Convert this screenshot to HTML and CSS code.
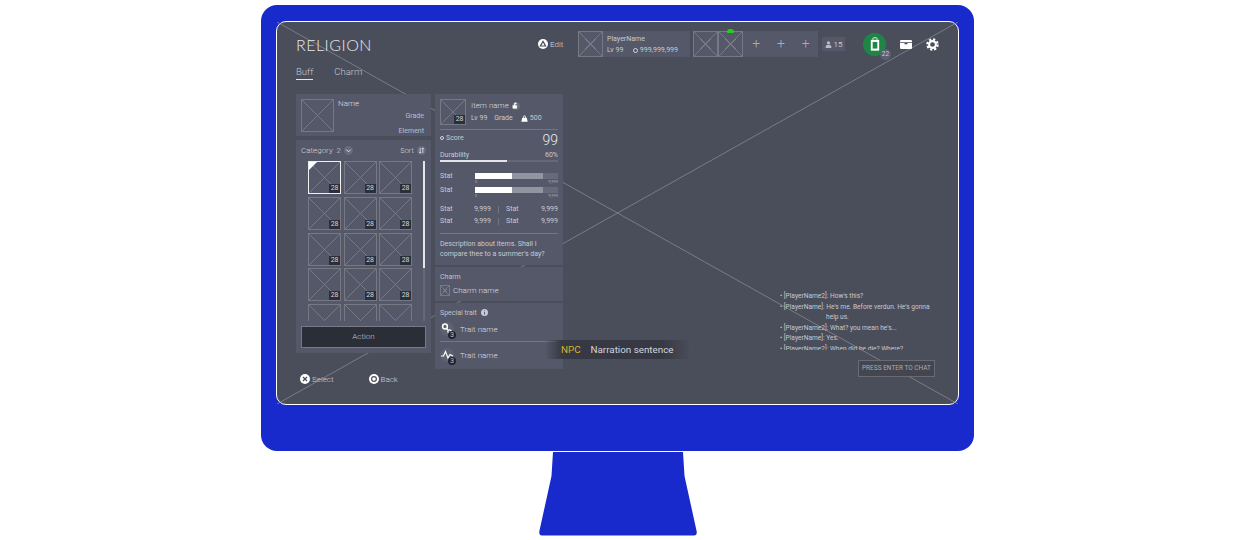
FILE: index.html
```html
<!DOCTYPE html>
<html lang="en">

<head>
    <meta charset="UTF-8">
    <meta name="viewport" content="width=device-width, initial-scale=1.0">
    <title>Religion</title>
    <link rel="stylesheet" href="styles.css">
</head>

<body>
    <div class="monitor">
        <div class="screen">
            <svg class="cross" viewBox="0 0 681 383" preserveAspectRatio="none">
                <line x1="0" y1="0" x2="681" y2="383" />
                <line x1="0" y1="383" x2="681" y2="0" />
            </svg>

            <div class="header">
                <div class="title">RELIGION</div>
                <div class="edit">
                    <svg class="hint-icon" viewBox="0 0 10 10">
                        <circle cx="5" cy="5" r="5" fill="#fff" />
                        <path d="M5 2.4 7.6 7H2.4Z" fill="none" stroke="#4a4d5a" stroke-width="1.2" />
                    </svg>
                    <span>Edit</span>
                </div>
                <div class="player">
                    <div class="ph ph-head"></div>
                    <div class="player-info">
                        <div>PlayerName</div>
                        <div class="player-sub">
                            <span>Lv 99</span>
                            <span class="coin"><i></i>999,999,999</span>
                        </div>
                    </div>
                </div>
                <div class="party">
                    <div class="ph ph-head"></div>
                    <div class="ph ph-head leader"></div>
                    <div class="plus">+</div>
                    <div class="plus">+</div>
                    <div class="plus">+</div>
                </div>
                <div class="online">
                    <svg viewBox="0 0 8 8" class="online-icon">
                        <circle cx="4" cy="2.2" r="1.9" fill="#b9bbc4" />
                        <path d="M.8 8V6.4C.8 5 2 4.5 4 4.5S7.2 5 7.2 6.4V8Z" fill="#b9bbc4" />
                    </svg>
                    <span>15</span>
                </div>
                <div class="quest">
                    <svg viewBox="0 0 12 16" class="quest-icon">
                        <path d="M3.5 3V1.5A1 1 0 0 1 4.5.5h3a1 1 0 0 1 1 1V3" fill="none" stroke="#fff" />
                        <path d="M1 3h10v13H1Z" fill="#fff" />
                        <path d="M3.2 5.5h5.6v8H3.2Z" fill="#1f8547" />
                    </svg>
                    <span class="quest-badge">22</span>
                </div>
                <svg viewBox="0 0 16 12" class="box-icon">
                    <path d="M1.5 0h13A1.5 1.5 0 0 1 16 1.5V3H0V1.5A1.5 1.5 0 0 1 1.5 0Z" fill="#fff" />
                    <path d="M0 4h6v1.5h4V4h6v6.5a1.5 1.5 0 0 1-1.5 1.5h-13A1.5 1.5 0 0 1 0 10.5Z" fill="#fff" />
                </svg>
                <svg viewBox="0 0 16 16" class="gear-icon">
                    <circle cx="8" cy="8" r="4.2" fill="none" stroke="#fff" stroke-width="2.6" />
                    <circle cx="8" cy="8" r="6.4" fill="none" stroke="#fff" stroke-width="2.6" stroke-dasharray="2.8 2.2" />
                </svg>
            </div>

            <div class="tabs">
                <div class="tab active">Buff</div>
                <div class="tab">Charm</div>
            </div>

            <div class="main">
                <div class="col-left">
                    <div class="panel name-card">
                        <div class="ph ph-name"></div>
                        <div class="name-info">
                            <div class="name-title">Name</div>
                            <div class="name-right">Grade</div>
                            <div class="name-right">Element</div>
                        </div>
                    </div>

                    <div class="panel inventory">
                        <div class="inv-head">
                            <span>Category&nbsp; 2</span>
                            <span class="round">
                                <svg viewBox="0 0 8 8"><path d="M1.5 3 4 5.5 6.5 3" fill="none" stroke="#e4e5ea" stroke-width="1.1" /></svg>
                            </span>
                            <span class="sort">Sort</span>
                            <span class="round">
                                <svg viewBox="0 0 8 8"><path d="M2.5 1v6M1.2 5.6 2.5 7 3.8 5.6M5.5 7V1M4.2 2.4 5.5 1 6.8 2.4" fill="none" stroke="#e4e5ea" stroke-width=".9" /></svg>
                            </span>
                        </div>
                        <div class="inv-body">
                            <div class="grid">
                                <div class="ph cell selected"><span class="count">28</span></div>
                                <div class="ph cell"><span class="count">28</span></div>
                                <div class="ph cell"><span class="count">28</span></div>
                                <div class="ph cell"><span class="count">28</span></div>
                                <div class="ph cell"><span class="count">28</span></div>
                                <div class="ph cell"><span class="count">28</span></div>
                                <div class="ph cell"><span class="count">28</span></div>
                                <div class="ph cell"><span class="count">28</span></div>
                                <div class="ph cell"><span class="count">28</span></div>
                                <div class="ph cell"><span class="count">28</span></div>
                                <div class="ph cell"><span class="count">28</span></div>
                                <div class="ph cell"><span class="count">28</span></div>
                                <div class="ph cell"></div>
                                <div class="ph cell"></div>
                                <div class="ph cell"></div>
                            </div>
                            <div class="scroll"><div class="scroll-thumb"></div></div>
                        </div>
                        <div class="action">Action</div>
                    </div>

                    <div class="hints">
                        <div class="hint">
                            <svg class="hint-icon" viewBox="0 0 10 10">
                                <circle cx="5" cy="5" r="5" fill="#fff" />
                                <path d="M3 3 7 7M7 3 3 7" stroke="#4a4d5a" stroke-width="1.2" />
                            </svg>
                            <span>Select</span>
                        </div>
                        <div class="hint">
                            <svg class="hint-icon" viewBox="0 0 10 10">
                                <circle cx="5" cy="5" r="5" fill="#fff" />
                                <circle cx="5" cy="5" r="2.4" fill="none" stroke="#4a4d5a" stroke-width="1.2" />
                            </svg>
                            <span>Back</span>
                        </div>
                    </div>
                </div>

                <div class="col-right">
                    <div class="panel item">
                        <div class="item-head">
                            <div class="ph ph-item"><span class="count">28</span></div>
                            <div class="item-info">
                                <div class="item-name">
                                    <span>Item name</span>
                                    <span class="round round-small">
                                        <svg viewBox="0 0 8 8"><path d="M1 4h4.4v3.2H1ZM2.6 4V2.4A1.5 1.5 0 0 1 5.4 1.6" fill="#fff" stroke="#fff" stroke-width=".6" /></svg>
                                    </span>
                                </div>
                                <div class="item-sub">
                                    <span>Lv 99</span>
                                    <span>Grade</span>
                                    <span class="weight">
                                        <svg viewBox="0 0 8 8"><path d="M2.6 3V2a1.4 1.4 0 0 1 2.8 0v1h1.2L7.6 7.6H.4L1.4 3ZM3.4 3h1.2V2a.6.6 0 0 0-1.2 0Z" fill="#fff" fill-rule="evenodd" /></svg>
                                        500
                                    </span>
                                </div>
                            </div>
                        </div>
                        <div class="score">
                            <span class="score-label"><i></i>Score</span>
                            <span class="score-value">99</span>
                        </div>
                        <div class="row-between">
                            <span>Durability</span>
                            <span>60%</span>
                        </div>
                        <div class="durability"><div class="durability-fill"></div></div>

                        <div class="stat stat-first">
                            <span class="stat-label">Stat</span>
                            <div class="stat-side">
                                <div class="meter"><div class="meter-grey"></div><div class="meter-white"></div></div>
                                <div class="meter-scale"><span>0</span><span>9,999</span></div>
                            </div>
                        </div>
                        <div class="stat">
                            <span class="stat-label">Stat</span>
                            <div class="stat-side">
                                <div class="meter"><div class="meter-grey"></div><div class="meter-white"></div></div>
                                <div class="meter-scale"><span>0</span><span>9,999</span></div>
                            </div>
                        </div>

                        <div class="values">
                            <div class="values-row">
                                <span>Stat</span><span class="num">9,999</span><span class="sep"></span><span>Stat</span><span class="num">9,999</span>
                            </div>
                            <div class="values-row">
                                <span>Stat</span><span class="num">9,999</span><span class="sep"></span><span>Stat</span><span class="num">9,999</span>
                            </div>
                        </div>
                        <p class="desc">Description about items. Shall I compare thee to a summer's day?</p>
                    </div>

                    <div class="panel charm">
                        <div class="section-title">Charm</div>
                        <div class="charm-row">
                            <div class="ph ph-charm"></div>
                            <span>Charm name</span>
                        </div>
                    </div>

                    <div class="panel trait">
                        <div class="section-title">
                            Special trait
                            <svg class="info-icon" viewBox="0 0 8 8">
                                <circle cx="4" cy="4" r="4" fill="#c9cad1" />
                                <path d="M4 3.4V6.4M4 1.5V2.5" stroke="#555868" />
                            </svg>
                        </div>
                        <div class="trait-row">
                            <div class="trait-icon">
                                <svg viewBox="0 0 14 14">
                                    <circle cx="5" cy="4.5" r="2.4" fill="none" stroke="#fff" stroke-width="1.5" />
                                    <path d="M6.5 6.5 8 8" stroke="#fff" stroke-width="1.5" />
                                    <circle cx="9.5" cy="9.5" r="1.7" fill="none" stroke="#fff" stroke-width="1.2" />
                                </svg>
                                <span class="trait-level">3</span>
                            </div>
                            <span>Trait name</span>
                        </div>
                        <div class="trait-row trait-last">
                            <div class="trait-icon">
                                <svg viewBox="0 0 14 14">
                                    <path d="M1 8 3.5 8 5.5 3.5 8 10 10 6.5 13 8" fill="none" stroke="#fff" stroke-width="1.2" />
                                </svg>
                                <span class="trait-level">3</span>
                            </div>
                            <span>Trait name</span>
                        </div>
                    </div>
                </div>

                <div class="col-chat">
                    <div class="chat">
                        <div class="chat-line">&bull; [PlayerName2]: How's this?</div>
                        <div class="chat-line">&bull; [PlayerName]: He's me. Before verdun. He's gonna</div>
                        <div class="chat-line chat-indent">help us.</div>
                        <div class="chat-line">&bull; [PlayerName2]: What? you mean he's...</div>
                        <div class="chat-line">&bull; [PlayerName]: Yes.</div>
                        <div class="chat-line">&bull; [PlayerName2]: When did he die? Where?</div>
                    </div>
                    <div class="press">PRESS ENTER TO CHAT</div>
                </div>
            </div>

            <div class="narration">
                <span class="npc">NPC</span>
                <span>Narration sentence</span>
            </div>
        </div>
    </div>

    <svg class="stand" viewBox="0 0 158 84">
        <path d="M14 0H144L145.5 24 157.6 79Q158.4 83 155 83.5H3Q-.4 83 .4 79L12.5 24Z" fill="#192acc" />
    </svg>
</body>

</html>
```

FILE: styles.css
```css
body {
    background-color: #fff;
    color: #c8c9d0;
    font-family: Roboto, "Liberation Sans", sans-serif;
    font-size: 7px;
    margin: 0;
    padding: 5px 0 0 0;
    display: flex;
    flex-direction: column;
    align-items: center;
    overflow: hidden;
}

.monitor {
    width: 713px;
    height: 446px;
    margin-left: -1px;
    background-color: #192acc;
    border-radius: 16px;
    padding: 16px 0 0 15px;
    box-sizing: border-box;
}

.stand {
    display: block;
    width: 158px;
    height: 84px;
    margin-top: 1px;
}

.screen {
    position: relative;
    isolation: isolate;
    width: 683px;
    height: 384px;
    box-sizing: border-box;
    background-color: #4a4d5a;
    border: 1px solid #fff;
    border-radius: 10px;
    padding: 9px 23px 0 19px;
}

.cross {
    position: absolute;
    left: 0;
    top: 0;
    width: 100%;
    height: 100%;
    z-index: -1;
}

.cross line {
    stroke: #7a7c88;
    stroke-width: 1;
}

/* placeholder image box */
.ph {
    position: relative;
    box-sizing: border-box;
    flex: none;
    border: 1px solid #767884;
    background:
        linear-gradient(to top right, transparent calc(50% - .5px), #767884 calc(50% - .5px), #767884 calc(50% + .5px), transparent calc(50% + .5px)),
        linear-gradient(to bottom right, transparent calc(50% - .5px), #767884 calc(50% - .5px), #767884 calc(50% + .5px), transparent calc(50% + .5px));
}

.count {
    position: absolute;
    right: 0;
    bottom: 0;
    background-color: #2c2e38;
    color: #d4d5db;
    font-size: 7px;
    line-height: 9px;
    padding: 0 1.5px;
}

/* header */
.header {
    display: flex;
    align-items: center;
    height: 26px;
}

.title {
    flex: 0 0 242px;
    font-family: Lato, sans-serif;
    font-weight: 300;
    font-size: 16px;
    letter-spacing: .5px;
    color: #e8e9ed;
}

.edit {
    flex: 0 0 40px;
    display: flex;
    align-items: center;
    gap: 2px;
    font-size: 8px;
    font-weight: 300;
    color: #dcdde2;
}

.hint-icon {
    width: 10px;
    height: 10px;
    flex: none;
}

.player {
    flex: 0 0 112px;
    display: flex;
    height: 26px;
    background-color: #555868;
}

.ph-head {
    width: 25px;
    height: 26px;
}

.player-info {
    padding: 3px 0 0 4px;
    line-height: 11px;
}

.player-sub {
    display: flex;
    gap: 10px;
}

.coin {
    display: flex;
    align-items: center;
    gap: 1.5px;
}

.coin i {
    width: 3px;
    height: 3px;
    border: 1px solid #d4d5db;
    border-radius: 50%;
}

.party {
    flex: 0 0 125px;
    display: flex;
    height: 26px;
    margin-left: 3px;
    background-color: #555868;
}

.leader::before {
    content: "";
    position: absolute;
    left: 8px;
    top: -3px;
    width: 7px;
    height: 4px;
    border-radius: 3px 3px 1px 1px;
    background-color: #1fd01f;
}

.plus {
    flex: 0 0 24.67px;
    text-align: center;
    font-size: 14px;
    line-height: 25px;
    font-weight: 300;
    color: #a9abb5;
}

.party .plus:nth-child(3) {
    margin-left: 1px;
}

.online {
    display: flex;
    align-items: center;
    justify-content: center;
    gap: 2px;
    flex: 0 0 23px;
    height: 14px;
    margin-left: 4px;
    background-color: #555868;
    font-size: 8px;
}

.online-icon {
    width: 7px;
    height: 7px;
}

.quest {
    position: relative;
    flex: none;
    display: flex;
    align-items: center;
    justify-content: center;
    width: 23px;
    height: 23px;
    margin-left: 18px;
    border-radius: 50%;
    background-color: #1f8547;
}

.quest-icon {
    width: 10px;
    height: 14px;
}

.quest-badge {
    position: absolute;
    right: -5px;
    bottom: -4px;
    width: 11px;
    height: 11px;
    border-radius: 50%;
    background-color: #5c5f6e;
    text-align: center;
    font-size: 6.5px;
    line-height: 11px;
}

.box-icon {
    width: 12px;
    height: 9px;
    margin-left: 14px;
    flex: none;
}

.gear-icon {
    width: 13px;
    height: 13px;
    margin-left: 14px;
    flex: none;
}

/* tabs */
.tabs {
    display: flex;
    gap: 21px;
    margin-top: 8px;
    height: 15px;
    font-size: 9.5px;
    line-height: 13px;
    font-weight: 300;
}

.tab {
    box-sizing: border-box;
    height: 15px;
}

.tab.active {
    border-bottom: 1px solid #e4e5ea;
}

/* main columns */
.main {
    display: flex;
    gap: 4px;
    margin-top: 14px;
}

.panel {
    background-color: #555868;
    box-sizing: border-box;
}

.col-left {
    flex: 0 0 135px;
    display: flex;
    flex-direction: column;
    gap: 4px;
}

.col-right {
    flex: 0 0 128px;
    display: flex;
    flex-direction: column;
    gap: 2px;
}

.name-card {
    display: flex;
    height: 42px;
    padding: 5px 7px 0 5px;
}

.ph-name {
    width: 33px;
    height: 33px;
}

.name-info {
    flex: 1;
    padding-left: 4px;
}

.name-title {
    line-height: 10px;
    font-size: 8px;
    font-weight: 300;
    color: #dcdde2;
}

.name-right {
    text-align: right;
    line-height: 15px;
    color: #bcbec7;
}

.inventory {
    height: 213px;
    padding: 5px 5px 0;
}

.inv-head {
    display: flex;
    align-items: center;
    height: 10px;
    font-size: 8px;
    font-weight: 300;
    color: #d4d5db;
}

.round {
    display: inline-flex;
    align-items: center;
    justify-content: center;
    width: 9px;
    height: 9px;
    margin-left: 3px;
    border-radius: 50%;
    background-color: #686b7a;
}

.round svg {
    width: 7px;
    height: 7px;
}

.round-small {
    width: 8px;
    height: 8px;
}

.sort {
    margin-left: auto;
    font-size: 7.5px;
}

.inv-body {
    display: flex;
    height: 160px;
    margin-top: 6px;
    padding-left: 7px;
    overflow: hidden;
}

.grid {
    display: grid;
    grid-template-columns: repeat(3, 33px);
    grid-auto-rows: 33px;
    gap: 2.75px 2.5px;
    flex: none;
}

.selected {
    border: 1.5px solid #eee;
}

.selected::before {
    content: "";
    position: absolute;
    left: 0;
    top: 0;
    border-style: solid;
    border-width: 4px;
    border-color: #fff transparent transparent #fff;
}

.scroll {
    width: 2px;
    height: 160px;
    margin-left: 11px;
    background-color: #656876;
}

.scroll-thumb {
    height: 107px;
    background-color: #e4e5ea;
}

.action {
    box-sizing: border-box;
    height: 22px;
    margin-top: 5px;
    background-color: #2b2d37;
    border: 1px solid #777985;
    text-align: center;
    line-height: 20px;
    font-size: 8px;
    font-weight: 300;
}

.hints {
    display: flex;
    gap: 35px;
    margin-top: 17px;
    padding-left: 4px;
}

.hint {
    display: flex;
    align-items: center;
    gap: 2px;
    font-size: 8px;
    font-weight: 300;
    color: #d4d5db;
}

/* item detail */
.item {
    height: 171px;
    padding: 5px 5px 0;
}

.item-head {
    display: flex;
    box-sizing: border-box;
    height: 31px;
    border-bottom: 1px solid #74767f;
}

.ph-item {
    width: 26px;
    height: 26px;
}

.item-info {
    padding-left: 5px;
}

.item-name {
    display: flex;
    align-items: center;
    height: 13px;
    font-size: 8px;
    font-weight: 300;
    color: #dcdde2;
}

.item-sub {
    display: flex;
    gap: 7px;
    margin-top: 1px;
    line-height: 11px;
}

.weight {
    display: flex;
    align-items: center;
    gap: 2px;
    margin-left: 1px;
}

.weight svg {
    width: 7px;
    height: 7px;
}

.score {
    display: flex;
    justify-content: space-between;
    height: 20px;
    align-items: center;
}

.score-label {
    display: flex;
    align-items: center;
    gap: 2px;
    margin-top: -5px;
}

.score-label i {
    width: 2px;
    height: 2px;
    border: 1px solid #d4d5db;
    border-radius: 50%;
}

.score-value {
    font-size: 14px;
    font-weight: 300;
    color: #e8e9ed;
}

.row-between {
    display: flex;
    justify-content: space-between;
    line-height: 10px;
}

.durability {
    height: 2px;
    background-color: #656876;
}

.durability-fill {
    width: 67px;
    height: 2px;
    background-color: #e4e5ea;
}

.stat {
    display: flex;
    height: 14px;
}

.stat-first {
    margin-top: 10px;
}

.stat-label {
    flex: 0 0 35px;
    line-height: 8px;
}

.stat-side {
    flex: 1;
}

.meter {
    position: relative;
    height: 6px;
    margin-top: 1px;
    background-color: #676a78;
}

.meter-grey {
    position: absolute;
    left: 0;
    top: 0;
    width: 68px;
    height: 6px;
    background-color: #92949f;
}

.meter-white {
    position: absolute;
    left: 0;
    top: 0;
    width: 37px;
    height: 6px;
    background-color: #fff;
}

.meter-scale {
    display: flex;
    justify-content: space-between;
    font-size: 4px;
    line-height: 5px;
    color: #a9abb5;
}

.values {
    margin-top: 3px;
    border-bottom: 1px solid #74767f;
    padding-bottom: 6px;
}

.values-row {
    display: grid;
    grid-template-columns: 25px 26px 15px 25px 27px;
    line-height: 12px;
}

.num {
    text-align: right;
}

.sep {
    width: 1px;
    height: 7px;
    margin: 3px 0 0 7px;
    background-color: #74767f;
}

.desc {
    margin: 5px 0 0;
    line-height: 10px;
}

.charm {
    height: 34px;
    padding: 5px 5px 0;
}

.section-title {
    display: flex;
    align-items: center;
    gap: 4px;
    height: 9px;
    color: #c0c2ca;
}

.charm-row {
    display: flex;
    align-items: center;
    gap: 3px;
    margin-top: 4px;
    font-size: 8px;
    font-weight: 300;
    color: #dcdde2;
}

.ph-charm {
    width: 10px;
    height: 11px;
}

.trait {
    height: 66px;
    padding: 5px 5px 0;
}

.info-icon {
    width: 7px;
    height: 7px;
}

.trait-row {
    display: flex;
    align-items: center;
    gap: 6px;
    height: 25px;
    border-bottom: 1px solid #74767f;
    font-size: 8px;
    font-weight: 300;
    color: #dcdde2;
    box-sizing: border-box;
}

.trait-last {
    height: 26px;
    border-bottom: none;
}

.trait-icon {
    position: relative;
    width: 14px;
    height: 14px;
    border-radius: 50%;
    background-color: #5e6170;
}

.trait-icon svg {
    display: block;
    width: 14px;
    height: 14px;
}

.trait-level {
    position: absolute;
    right: -2px;
    bottom: -3px;
    width: 8px;
    height: 8px;
    border-radius: 50%;
    background-color: #22242c;
    color: #fff;
    text-align: center;
    font-size: 6.5px;
    line-height: 8px;
}

/* chat */
.col-chat {
    flex: 1;
    display: flex;
    flex-direction: column;
    align-items: flex-end;
    padding-top: 197px;
}

.chat {
    width: 155px;
    height: 59px;
    overflow: hidden;
    padding-right: 10px;
    box-sizing: border-box;
}

.chat-line {
    line-height: 10.5px;
    font-size: 6.6px;
    white-space: nowrap;
}

.chat-indent {
    padding-left: 46px;
}

.press {
    box-sizing: border-box;
    width: 77px;
    height: 17px;
    margin-top: 10px;
    background-color: #43454f;
    border: 1px solid #686a75;
    color: #a9abb5;
    text-align: center;
    font-size: 6.5px;
    line-height: 15px;
}

.narration {
    position: absolute;
    left: 268px;
    top: 318px;
    display: flex;
    gap: 10px;
    width: 145px;
    height: 19px;
    padding-left: 16px;
    box-sizing: border-box;
    background: linear-gradient(to right, transparent, #363843 12%, #363843 80%, transparent);
    font-size: 9.8px;
    line-height: 19px;
    color: #d4d5db;
}

.npc {
    color: #d9b32e;
}
```
